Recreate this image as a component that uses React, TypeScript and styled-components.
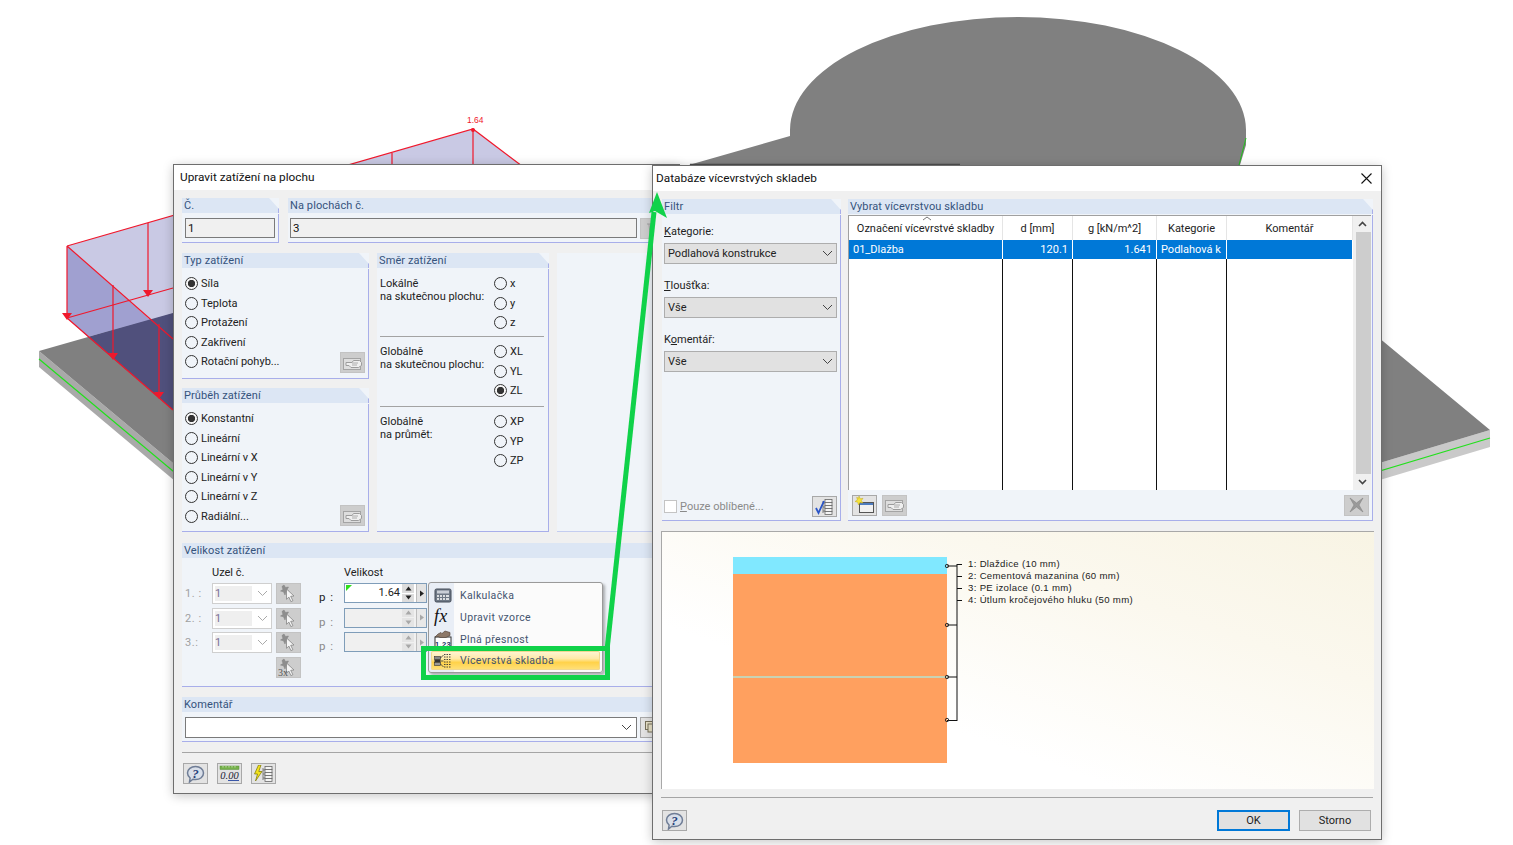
import React from 'react';
import styled, { createGlobalStyle } from 'styled-components';

const GlobalStyle = createGlobalStyle`
  html, body { margin: 0; padding: 0; background: #fff; }
  body { font-family: Roboto, "Liberation Sans", Arial, sans-serif; font-size: 11px; color: #111; }
`;

const Desk = styled.div`
  position: relative;
  width: 1513px;
  height: 845px;
  overflow: hidden;
  background: #fff;
`;

const Backdrop = styled.svg`
  position: absolute;
  inset: 0;
`;

const Overlay = styled.svg`
  position: absolute;
  inset: 0;
  z-index: 5;
  pointer-events: none;
`;

// Fenster auf der Arbeitsfläche
const Win = styled.div<{ $x: number; $y: number; $w: number; $h: number; $z: number }>`
  position: absolute;
  left: ${p => p.$x}px;
  top: ${p => p.$y}px;
  width: ${p => p.$w}px;
  height: ${p => p.$h}px;
  z-index: ${p => p.$z};
  box-sizing: border-box;
  display: flex;
  flex-direction: column;
  background: #f0f0f0;
  border: 1px solid #6e6e6e;
  box-shadow: 0 2px 10px rgba(0, 0, 0, 0.22);
`;

const TitleBar = styled.div<{ $h: number; $pad: number }>`
  flex: none;
  box-sizing: border-box;
  height: ${p => p.$h}px;
  background: #fff;
  display: flex;
  align-items: center;
  justify-content: space-between;
  padding: 0 9px 1px ${p => p.$pad}px;
  font-size: 11.8px;
  color: #111;
`;

const LeftBody = styled.div`
  display: flex;
  flex-direction: column;
  padding: 8px 8px 0 8px;
`;

const Row = styled.div<{ $gap: number; $mt?: number }>`
  display: flex;
  gap: ${p => p.$gap}px;
  margin-top: ${p => p.$mt ?? 0}px;
`;

const Column = styled.div<{ $w: number; $gap: number }>`
  width: ${p => p.$w}px;
  flex: none;
  display: flex;
  flex-direction: column;
  gap: ${p => p.$gap}px;
`;

const Group = styled.section<{ $w?: number; $h: number; $mt?: number }>`
  box-sizing: border-box;
  width: ${p => (p.$w ? `${p.$w}px` : 'auto')};
  flex: ${p => (p.$w ? 'none' : '1 1 auto')};
  height: ${p => p.$h}px;
  margin-top: ${p => p.$mt ?? 0}px;
  display: flex;
  flex-direction: column;
  background: #f0f4f9;
  border-bottom: 1px solid #a8aeea;
`;

const GroupHead = styled.div`
  flex: none;
  box-sizing: border-box;
  height: 15px;
  padding-left: 2px;
  line-height: 16px;
  font-size: 11px;
  letter-spacing: 0.1px;
  color: #35537c;
  background: #dce6f4;
  border-right: 1px solid #a8aeea;
  clip-path: polygon(0 0, calc(100% - 10px) 0, 100% 11px, 100% 100%, 0 100%);
`;

const GroupBody = styled.div`
  flex: 1;
  min-height: 0;
  margin-top: 1px;
  border-right: 1px solid #a8aeea;
  position: relative;
  display: flex;
  flex-direction: column;
`;

const BlankGroup = styled.div`
  flex: 1;
  box-sizing: border-box;
  height: 279px;
  background: #f0f4f9;
  border-bottom: 1px solid #c4cdf0;
`;

const ReadInput = styled.div<{ $w: number }>`
  box-sizing: border-box;
  width: ${p => p.$w}px;
  height: 20px;
  flex: none;
  background: #f0f0f0;
  border: 1px solid #7a7a7a;
  padding-left: 2px;
  line-height: 18px;
  font-size: 11.5px;
  color: #111;
`;

const InputRow = styled.div<{ $pad: number }>`
  display: flex;
  gap: 3px;
  padding: 4px 0 0 ${p => p.$pad}px;
`;

const RadioList = styled.div`
  display: flex;
  flex-direction: column;
  padding: 5px 0 0 3px;
`;

const RadioRow = styled.div`
  display: flex;
  align-items: center;
  gap: 3px;
  height: 19.5px;
  color: #222;
`;

const RadioDot = styled.span<{ $on?: boolean }>`
  flex: none;
  box-sizing: border-box;
  width: 13px;
  height: 13px;
  border-radius: 50%;
  border: 1px solid #333;
  background: ${p => (p.$on ? 'radial-gradient(circle, #333 0 3.4px, #f6f6f6 3.9px)' : 'transparent')};
`;

const CornerButton = styled.div`
  position: absolute;
  right: 3px;
  bottom: 5px;
`;

const IconBtn = styled.div<{ $off?: boolean; $w?: number }>`
  box-sizing: border-box;
  flex: none;
  width: ${p => p.$w ?? 25}px;
  height: 21px;
  display: flex;
  align-items: center;
  justify-content: center;
  background: ${p => (p.$off ? '#cdcdcd' : '#e3e3e3')};
  border: 1px solid ${p => (p.$off ? '#c3c3c3' : '#a8a8a8')};
  overflow: hidden;
`;

const DirBlock = styled.div<{ $h: number; $last?: boolean }>`
  box-sizing: border-box;
  height: ${p => p.$h}px;
  margin: 0 4px 0 3px;
  padding-top: 5px;
  display: flex;
  justify-content: space-between;
  border-bottom: ${p => (p.$last ? 'none' : '1px solid #a3a3a3')};
`;

const DirText = styled.div`
  padding-top: 3px;
  line-height: 13px;
  color: #222;
`;

const DirRadios = styled.div`
  width: 50px;
  flex: none;
  display: flex;
  flex-direction: column;
`;

// Velikost zatížení
const SizeGrid = styled.div`
  display: grid;
  grid-template-columns: 27px 60px 29px 43px 83px;
  grid-template-rows: 24px 24.5px 24.5px 24.5px auto;
  padding-left: 3px;
  align-items: start;
`;

const ColHead = styled.div<{ $col: number }>`
  grid-column: ${p => p.$col};
  align-self: center;
  padding-top: 2px;
  color: #222;
`;

const NodeLabel = styled.div`
  color: #a0a0a0;
  line-height: 21px;
  letter-spacing: 0.6px;
`;

const NodeSelect = styled.div`
  box-sizing: border-box;
  height: 21px;
  display: flex;
  align-items: center;
  justify-content: space-between;
  padding: 2px 3px 2px 2px;
  background: #fff;
  border: 1px solid #cfcfcf;
  color: #7a6f96;
`;

const NodeValue = styled.span`
  width: 37px;
  height: 100%;
  background: #efefef;
  line-height: 15px;
`;

const BtnCell = styled.div<{ $col?: number }>`
  padding-left: 4px;
  grid-column: ${p => p.$col ?? 'auto'};
`;

const PLabel = styled.div<{ $off?: boolean }>`
  padding: 7px 0 0 18px;
  letter-spacing: 1px;
  font-size: 11.5px;
  color: ${p => (p.$off ? '#8a8a8a' : '#222')};
`;

const SpinBox = styled.div<{ $off?: boolean }>`
  position: relative;
  box-sizing: border-box;
  height: 20px;
  display: flex;
  background: ${p => (p.$off ? '#f0f0f0' : '#fff')};
  border: 1px solid #7f9db9;
`;

const SpinValue = styled.div`
  flex: 1;
  text-align: right;
  padding-right: 2px;
  line-height: 18px;
  color: #222;
`;

const GreenFlag = styled.span`
  position: absolute;
  left: 1px;
  top: 1px;
  width: 0;
  height: 0;
  border-top: 6px solid #2fe01c;
  border-right: 6px solid transparent;
`;

const SpinArrows = styled.div`
  width: 12px;
  display: flex;
  flex-direction: column;
  gap: 1px;
  margin-right: 2px;
`;

const SpinPart = styled.div<{ $off?: boolean }>`
  flex: 1;
  background: ${p => (p.$off ? '#e4e4e4' : '#dcdcdc')};
  display: flex;
  align-items: center;
  justify-content: center;
`;

const SpinMore = styled.div<{ $off?: boolean }>`
  width: 9px;
  background: ${p => (p.$off ? '#e8e8e8' : '#e3e3e3')};
  border-left: 1px solid #bdbdbd;
  display: flex;
  align-items: center;
  justify-content: center;
`;

const CommentRow = styled.div`
  display: flex;
  gap: 3px;
  padding: 4px 0 0 3px;
`;

const CommentBox = styled.div`
  box-sizing: border-box;
  width: 452px;
  height: 21px;
  background: #fff;
  border: 1px solid #7a7a7a;
  display: flex;
  align-items: center;
  justify-content: flex-end;
  padding-right: 4px;
`;

const Separator = styled.div<{ $mt: number; $ml?: number }>`
  height: 1px;
  margin-top: ${p => p.$mt}px;
  margin-left: ${p => p.$ml ?? 0}px;
  background: #a5a5a5;
`;

const FootIcons = styled.div`
  display: flex;
  gap: 9px;
  margin: 10px 0 0 1px;
`;

// Kontextmenü über dem Eingabefeld
const Menu = styled.div`
  position: absolute;
  left: 254px;
  top: 417px;
  width: 175px;
  height: 91px;
  box-sizing: border-box;
  display: flex;
  flex-direction: column;
  padding: 1px 2px 0;
  background: linear-gradient(to right, #e9eef6 0 25px, #fbfbfb 25px);
  border: 1px solid #9a9a9a;
  border-radius: 3px;
  box-shadow: 2px 2px 3px rgba(0, 0, 0, 0.3);
  z-index: 3;
`;

const MenuItem = styled.div<{ $hot?: boolean }>`
  flex: none;
  height: ${p => (p.$hot ? 19 : 22)}px;
  margin-top: ${p => (p.$hot ? 1 : 0)}px;
  display: flex;
  align-items: center;
  gap: 6px;
  font-size: 10.5px;
  letter-spacing: 0.35px;
  color: #44546f;
  border-radius: 2px;
  background: ${p => (p.$hot ? 'linear-gradient(to bottom, #fff6d8 0%, #ffe9a8 40%, #ffd24a 60%, #ffe17c 100%)' : 'transparent')};
  box-shadow: ${p => (p.$hot ? 'inset 0 0 0 1px #f0d890' : 'none')};
`;

const MenuIcon = styled.span`
  width: 23px;
  flex: none;
  display: flex;
  justify-content: center;
`;

// Rechtes Fenster
const RightBody = styled.div`
  flex: 1;
  display: flex;
  flex-direction: column;
  padding: 8px 8px 0 9px;
`;

const FilterBody = styled.div`
  flex: 1;
  display: flex;
  flex-direction: column;
  padding: 10px 3px 3px 2px;
`;

const FieldLabel = styled.div<{ $mt: number }>`
  margin-top: ${p => p.$mt}px;
  height: 14px;
  line-height: 14px;
  color: #222;
`;

const Key = styled.span`
  text-decoration: underline;
`;

const ComboBox = styled.div`
  box-sizing: border-box;
  height: 21px;
  margin-top: 4px;
  display: flex;
  align-items: center;
  justify-content: space-between;
  padding: 0 3px 0 3px;
  background: #e1e1e1;
  border: 1px solid #adadad;
  color: #222;
`;

const FilterFoot = styled.div`
  margin-top: auto;
  display: flex;
  align-items: center;
  justify-content: space-between;
`;

const CheckWrap = styled.div`
  display: flex;
  align-items: center;
  gap: 3px;
  color: #8a8a8a;
`;

const CheckBox = styled.span`
  width: 11px;
  height: 11px;
  background: #fff;
  border: 1px solid #c4c4c4;
`;

const TableGrid = styled.div`
  flex: none;
  box-sizing: border-box;
  height: 275px;
  width: 523px;
  display: grid;
  grid-template-columns: 154px 70px 84px 70px 126px 18px;
  grid-template-rows: 24px 19px 1fr;
  background: #fff;
  border-top: 1px solid #a0a0a0;
  border-left: 1px solid #a0a0a0;
  position: relative;
`;

const HeadCell = styled.div`
  display: flex;
  align-items: center;
  justify-content: center;
  border-right: 1px solid #e5e5e5;
  color: #222;
`;

const SortMark = styled.svg`
  position: absolute;
  left: 73px;
  top: 0;
`;

const RowCell = styled.div<{ $right?: boolean }>`
  box-sizing: border-box;
  background: #0078d7;
  color: #fff;
  border-right: 1px solid #fff;
  line-height: 19px;
  padding: 0 4px;
  white-space: nowrap;
  overflow: hidden;
  text-align: ${p => (p.$right ? 'right' : 'left')};
`;

const EmptyCell = styled.div`
  border-right: 1px solid #111;
`;

const LastEmpty = styled.div`
  background: #fff;
`;

const ScrollTrack = styled.div`
  grid-column: 6;
  grid-row: 1 / 4;
  display: flex;
  flex-direction: column;
  align-items: center;
  background: #f0f0f0;
`;

const ScrollEnd = styled.div`
  flex: none;
  height: 16px;
  display: flex;
  align-items: center;
  justify-content: center;
`;

const ScrollThumb = styled.div`
  flex: 1;
  width: 15px;
  margin-left: 2px;
  background: #cdcdcd;
`;

const TableFoot = styled.div`
  flex: 1;
  display: flex;
  align-items: center;
  gap: 5px;
  padding: 0 3px 0 4px;
`;

const Push = styled.div`
  flex: 1;
`;

const Preview = styled.div`
  box-sizing: border-box;
  height: 258px;
  margin: 10px -1px 0 -1px;
  background: linear-gradient(to top right, #fff 32%, #fbf8ee 70%, #f8f4e4 100%);
  border-top: 1px solid #a8a8a8;
  border-left: 1px solid #a8a8a8;
`;

const RightFoot = styled.div`
  display: flex;
  align-items: center;
  margin: 12px 2px 0 0;
`;

const DlgButton = styled.div<{ $primary?: boolean }>`
  box-sizing: border-box;
  width: ${p => (p.$primary ? 73 : 72)}px;
  height: 21px;
  margin-left: ${p => (p.$primary ? 0 : 9)}px;
  text-align: center;
  line-height: ${p => (p.$primary ? 17 : 19)}px;
  background: #e1e1e1;
  border: ${p => (p.$primary ? '2px solid #0078d7' : '1px solid #adadad')};
  color: #222;
`;

const Svg = styled.svg`
  display: block;
  flex: none;
`;

const SmallChevron = () => (
  <Svg width="11" height="7" viewBox="0 0 11 7">
    <path d="M1 1l4.5 4.500L10 1" fill="none" stroke="#444" strokeWidth="1" />
  </Svg>
);

const TinyTri = ({ d, c }: { d: 'u' | 'd' | 'r'; c: string }) => (
  <Svg width="7" height="7" viewBox="0 0 7 7">
    <path d={d === 'u' ? 'M0.5 5.5h6L3.5 1.5z' : d === 'd' ? 'M0.5 1.5h6L3.5 5.5z' : 'M2 0.5v6L6 3.5z'} fill={c} />
  </Svg>
);

const HandIcon = () => (
  <Svg width="21" height="16" viewBox="0 0 21 16">
    <rect x="1.5" y="3.5" width="17" height="11" fill="#dedede" stroke="#a4a4a4" />
    <path d="M4 7.5h6l1.5-2h6l2 2v3l-3 2H9l-2-2H4z" fill="#efefef" stroke="#9c9c9c" />
    <path d="M10 8h6M10 10h5" stroke="#acacac" />
  </Svg>
);

const PickIcon = ({ tag }: { tag?: boolean }) => (
  <Svg width="21" height="19" viewBox="0 0 21 19">
    <path d="M6 1l1.5 2.5L10.5 3 9 5.5l2 2-3 .3L7 11 5.5 7.8 2.5 7l2.5-1.5L4 2.5z" fill="#8e8e8e" stroke="#808080" strokeWidth="0.5" />
    <path d="M8.5 5l7.500 7-3.300.3 2.200 4.400-2 .9-2-4.500-2.400 2.200z" fill="#f5f5f5" stroke="#858585" strokeWidth="0.8" />
    {tag && <text x="0" y="18" fontFamily="'Liberation Serif', serif" fontSize="10" fill="#555">3x</text>}
  </Svg>
);

const HelpIcon = () => (
  <Svg width="21" height="18" viewBox="0 0 21 18">
    <path d="M10.5 1.500c4.500 0 8 2.800 8 6.600s-3.500 6.400-8 6.400c-.9 0-1.800-.1-2.600-.3L4.500 17l.6-4C3.500 11.800 2.500 10 2.500 8.100c0-3.800 3.500-6.600 8-6.600z" fill="#d9dfe9" stroke="#6f7d96" strokeWidth="1.500" />
    <text x="10.500" y="12.500" textAnchor="middle" fontFamily="'Liberation Serif', serif" fontWeight="700" fontStyle="italic" fontSize="13" fill="#24407a">?</text>
  </Svg>
);

const ZeroIcon = () => (
  <Svg width="21" height="18" viewBox="0 0 21 18">
    <rect x="1" y="1" width="19" height="3.500" fill="#74b04a" stroke="#5a8f3a" strokeWidth="0.5" />
    <path d="M4 1v1.500M7 1v1.500M10 1v1.500M13 1v1.500M16 1v1.500" stroke="#d8ecc4" strokeWidth="0.8" />
    <text x="10.500" y="13.500" textAnchor="middle" fontFamily="'Liberation Serif', serif" fontStyle="italic" fontSize="10.500" fill="#223">0.00</text>
    <path d="M9 15.500h11" stroke="#3a57a8" strokeWidth="1" />
  </Svg>
);

const TreeRows = ({ x, c }: { x: number; c: string }) => (
  <g fill="#f4f4f4" stroke={c} strokeWidth="0.8">
    <path d={`M${x} 3v12M${x} 5h2M${x} 9h2M${x} 13h2`} fill="none" />
    <rect x={x + 2} y="1.500" width="7" height="3" />
    <rect x={x + 2} y="4.500" width="7" height="3" />
    <rect x={x + 2} y="7.500" width="7" height="3" />
    <rect x={x + 2} y="10.500" width="7" height="3" />
    <rect x={x + 2} y="13.500" width="7" height="3" />
  </g>
);

const BoltTreeIcon = () => (
  <Svg width="21" height="18" viewBox="0 0 21 18">
    <TreeRows x={10} c="#666" />
    <path d="M5.500 0L1.500 9h3L2.500 16 9 6.500H5.800L8 0z" fill="#f3e21c" stroke="#7a7400" strokeWidth="0.7" />
  </Svg>
);

const CheckTreeIcon = () => (
  <Svg width="21" height="18" viewBox="0 0 21 18">
    <TreeRows x={9} c="#666" />
    <path d="M2 10l2.500 5L10 3" fill="none" stroke="#2a55c8" strokeWidth="1.800" />
  </Svg>
);

const NewIcon = () => (
  <Svg width="21" height="18" viewBox="0 0 21 18">
    <rect x="5.500" y="6.500" width="14" height="10" fill="#f1f1f1" stroke="#555" />
    <rect x="6" y="7" width="13" height="2" fill="#4d7cc0" />
    <path d="M5 0l1.200 2.800 2.800-.5-1.700 2.400L9 7 6 6.500 4.500 9 3.700 6.200 1 5.500l2.400-1.500L2.700 1.200 4.500 2.300z" fill="#f6e43a" stroke="#c0a820" strokeWidth="0.5" />
  </Svg>
);

const CrossIcon = () => (
  <Svg width="19" height="18" viewBox="0 0 19 18">
    <path d="M3 2l6.500 5L16 2l-4 7 4 7-6.500-5L3 16l4-7z" fill="#9a9a9a" stroke="#858585" strokeWidth="0.6" />
  </Svg>
);

const TrashStub = () => (
  <Svg width="21" height="16" viewBox="0 0 21 16">
    <path d="M5 3h11M7 3l1 11h5l1-11" fill="#dedede" stroke="#a0a0a0" />
  </Svg>
);

const CopiesIcon = () => (
  <Svg width="19" height="16" viewBox="0 0 19 16">
    <rect x="2.500" y="1.500" width="10" height="8" fill="#e8e2c8" stroke="#77705a" />
    <rect x="5" y="4" width="10" height="8" fill="#e8e2c8" stroke="#77705a" />
  </Svg>
);

const CalcIcon = () => (
  <Svg width="18" height="15" viewBox="0 0 18 15">
    <rect x="1" y="1" width="16" height="13" rx="1.500" fill="#6f7986" stroke="#454c58" />
    <rect x="3" y="2.500" width="12" height="3" fill="#c9ced6" />
    <path d="M3 8h2M6 8h2M9 8h2M12 8h3M3 11h2M6 11h2M9 11h2M12 11h3" stroke="#fff" strokeWidth="1.300" />
  </Svg>
);

const FxIcon = () => (
  <Svg width="20" height="20" viewBox="0 0 20 20">
    <text x="1" y="15" fontFamily="'Liberation Serif', serif" fontStyle="italic" fontSize="18" fill="#111">fx</text>
  </Svg>
);

const PrecisionIcon = () => (
  <Svg width="18" height="19" viewBox="0 0 18 19">
    <rect x="1" y="7" width="16" height="11" fill="#fff" stroke="#333" />
    <path d="M1 7l3-3 3-1.500 1 1 3-2.500 5 1.500v3l-4 2H6L4 6.500z" fill="#8d7868" stroke="#4a3a30" strokeWidth="0.6" />
    <text x="9" y="16.500" textAnchor="middle" fontFamily="'Liberation Sans', sans-serif" fontWeight="700" fontSize="7.500" fill="#1c2f60">1.23</text>
  </Svg>
);

const LayersIcon = () => (
  <Svg width="18" height="15" viewBox="0 0 18 15">
    <rect x="0.500" y="3.500" width="6" height="3" fill="#888" stroke="#333" strokeWidth="0.6" />
    <rect x="0.500" y="6.500" width="6" height="3" fill="#333" />
    <rect x="0.500" y="9.500" width="6" height="3" fill="#999" stroke="#333" strokeWidth="0.6" />
    <path d="M6.500 5l3-3M6.500 8h3M6.500 11l3 3" stroke="#333" strokeWidth="0.8" />
    <path d="M10 1.500h7M10 4h7M10 6.500h7M10 9h7M10 11.500h7M10 14h7" stroke="#333" strokeWidth="0.9" strokeDasharray="1.500 1" />
  </Svg>
);

const RadioItem = ({ label, on }: { label: string; on?: boolean }) => (
  <RadioRow>
    <RadioDot $on={on} />
    {label}
  </RadioRow>
);

const NodeRow = ({ n }: { n: string }) => (
  <>
    <NodeLabel>{n}</NodeLabel>
    <NodeSelect>
      <NodeValue>1</NodeValue>
      <Svg width="11" height="7" viewBox="0 0 11 7">
        <path d="M1 1l4.500 4.500L10 1" fill="none" stroke="#aaa" />
      </Svg>
    </NodeSelect>
    <BtnCell>
      <IconBtn $off>
        <PickIcon />
      </IconBtn>
    </BtnCell>
  </>
);

const SpinField = ({ value }: { value?: string }) => {
  const off = !value;
  const arrow = off ? '#a8a8a8' : '#222';
  return (
    <SpinBox $off={off}>
      {value && <GreenFlag />}
      <SpinValue>{value}</SpinValue>
      <SpinArrows>
        <SpinPart $off={off}>
          <TinyTri d="u" c={arrow} />
        </SpinPart>
        <SpinPart $off={off}>
          <TinyTri d="d" c={arrow} />
        </SpinPart>
      </SpinArrows>
      <SpinMore $off={off}>
        <TinyTri d="r" c={arrow} />
      </SpinMore>
    </SpinBox>
  );
};

const columns = ['d [mm]', 'g [kN/m^2]', 'Kategorie', 'Komentář'];

const LoadDialog = () => (
  <Win $x={173} $y={164} $w={507} $h={630} $z={1}>
    <TitleBar $h={25} $pad={6}>Upravit zatížení na plochu</TitleBar>
    <LeftBody>
      <Row $gap={9}>
        <Group $w={97} $h={45}>
          <GroupHead>Č.</GroupHead>
          <GroupBody>
            <InputRow $pad={3}>
              <ReadInput $w={90}>1</ReadInput>
            </InputRow>
          </GroupBody>
        </Group>
        <Group $h={45}>
          <GroupHead>Na plochách č.</GroupHead>
          <GroupBody>
            <InputRow $pad={2}>
              <ReadInput $w={347}>3</ReadInput>
              <IconBtn $off>
                <TrashStub />
              </IconBtn>
            </InputRow>
          </GroupBody>
        </Group>
      </Row>
      <Row $gap={8} $mt={10}>
        <Column $w={187} $gap={9}>
          <Group $h={126}>
            <GroupHead>Typ zatížení</GroupHead>
            <GroupBody>
              <RadioList>
                <RadioItem label="Síla" on />
                <RadioItem label="Teplota" />
                <RadioItem label="Protažení" />
                <RadioItem label="Zakřivení" />
                <RadioItem label="Rotační pohyb..." />
              </RadioList>
              <CornerButton>
                <IconBtn $off>
                  <HandIcon />
                </IconBtn>
              </CornerButton>
            </GroupBody>
          </Group>
          <Group $h={144}>
            <GroupHead>Průběh zatížení</GroupHead>
            <GroupBody>
              <RadioList>
                <RadioItem label="Konstantní" on />
                <RadioItem label="Lineární" />
                <RadioItem label="Lineární v X" />
                <RadioItem label="Lineární v Y" />
                <RadioItem label="Lineární v Z" />
                <RadioItem label="Radiální..." />
              </RadioList>
              <CornerButton>
                <IconBtn $off>
                  <HandIcon />
                </IconBtn>
              </CornerButton>
            </GroupBody>
          </Group>
        </Column>
        <Group $w={172} $h={279}>
          <GroupHead>Směr zatížení</GroupHead>
          <GroupBody>
            <DirBlock $h={68}>
              <DirText>
                Lokálně
                <br />
                na skutečnou plochu:
              </DirText>
              <DirRadios>
                <RadioItem label="x" />
                <RadioItem label="y" />
                <RadioItem label="z" />
              </DirRadios>
            </DirBlock>
            <DirBlock $h={70}>
              <DirText>
                Globálně
                <br />
                na skutečnou plochu:
              </DirText>
              <DirRadios>
                <RadioItem label="XL" />
                <RadioItem label="YL" />
                <RadioItem label="ZL" on />
              </DirRadios>
            </DirBlock>
            <DirBlock $h={80} $last>
              <DirText>
                Globálně
                <br />
                na průmět:
              </DirText>
              <DirRadios>
                <RadioItem label="XP" />
                <RadioItem label="YP" />
                <RadioItem label="ZP" />
              </DirRadios>
            </DirBlock>
          </GroupBody>
        </Group>
        <BlankGroup />
      </Row>
      <Group $h={144} $mt={11}>
        <GroupHead>Velikost zatížení</GroupHead>
        <GroupBody>
          <SizeGrid>
            <ColHead $col={2}>Uzel č.</ColHead>
            <ColHead $col={5}>Velikost</ColHead>
            <NodeRow n="1. :" />
            <PLabel>p :</PLabel>
            <SpinField value="1.64" />
            <NodeRow n="2. :" />
            <PLabel $off>p :</PLabel>
            <SpinField />
            <NodeRow n="3.:" />
            <PLabel $off>p :</PLabel>
            <SpinField />
            <BtnCell $col={3}>
              <IconBtn $off>
                <PickIcon tag />
              </IconBtn>
            </BtnCell>
          </SizeGrid>
        </GroupBody>
      </Group>
      <Group $h={45} $mt={10}>
        <GroupHead>Komentář</GroupHead>
        <GroupBody>
          <CommentRow>
            <CommentBox>
              <SmallChevron />
            </CommentBox>
            <IconBtn>
              <CopiesIcon />
            </IconBtn>
          </CommentRow>
        </GroupBody>
      </Group>
      <Separator $mt={10} />
      <FootIcons>
        <IconBtn>
          <HelpIcon />
        </IconBtn>
        <IconBtn>
          <ZeroIcon />
        </IconBtn>
        <IconBtn>
          <BoltTreeIcon />
        </IconBtn>
      </FootIcons>
    </LeftBody>
    <Menu>
      <MenuItem>
        <MenuIcon>
          <CalcIcon />
        </MenuIcon>
        Kalkulačka
      </MenuItem>
      <MenuItem>
        <MenuIcon>
          <FxIcon />
        </MenuIcon>
        Upravit vzorce
      </MenuItem>
      <MenuItem>
        <MenuIcon>
          <PrecisionIcon />
        </MenuIcon>
        Plná přesnost
      </MenuItem>
      <MenuItem $hot>
        <MenuIcon>
          <LayersIcon />
        </MenuIcon>
        Vícevrstvá skladba
      </MenuItem>
    </Menu>
  </Win>
);

const DatabaseDialog = () => (
  <Win $x={652} $y={165} $w={730} $h={675} $z={2}>
    <TitleBar $h={25} $pad={3}>
      Databáze vícevrstvých skladeb
      <Svg width="11" height="11" viewBox="0 0 11 11">
        <path d="M0.500 0.500l10 10M10.500 0.500l-10 10" stroke="#111" strokeWidth="1.100" />
      </Svg>
    </TitleBar>
    <RightBody>
      <Row $gap={7}>
        <Group $w={179} $h={322}>
          <GroupHead>Filtr</GroupHead>
          <GroupBody>
            <FilterBody>
              <FieldLabel $mt={0}>
                <Key>K</Key>ategorie:
              </FieldLabel>
              <ComboBox>
                Podlahová konstrukce
                <SmallChevron />
              </ComboBox>
              <FieldLabel $mt={15}>
                <Key>T</Key>loušťka:
              </FieldLabel>
              <ComboBox>
                Vše
                <SmallChevron />
              </ComboBox>
              <FieldLabel $mt={15}>
                K<Key>o</Key>mentář:
              </FieldLabel>
              <ComboBox>
                Vše
                <SmallChevron />
              </ComboBox>
              <FilterFoot>
                <CheckWrap>
                  <CheckBox />
                  <span>
                    <Key>P</Key>ouze oblíbené...
                  </span>
                </CheckWrap>
                <IconBtn>
                  <CheckTreeIcon />
                </IconBtn>
              </FilterFoot>
            </FilterBody>
          </GroupBody>
        </Group>
        <Group $w={525} $h={322}>
          <GroupHead>Vybrat vícevrstvou skladbu</GroupHead>
          <GroupBody>
            <TableGrid>
              <SortMark width="10" height="5" viewBox="0 0 10 5">
                <path d="M1 4l4-3 4 3" fill="none" stroke="#777" />
              </SortMark>
              <HeadCell>Označení vícevrstvé skladby</HeadCell>
              {columns.map(c => (
                <HeadCell key={c}>{c}</HeadCell>
              ))}
              <ScrollTrack>
                <ScrollEnd>
                  <Svg width="9" height="6" viewBox="0 0 9 6">
                    <path d="M1 5l3.500-3.500L8 5" fill="none" stroke="#444" strokeWidth="1.600" />
                  </Svg>
                </ScrollEnd>
                <ScrollThumb />
                <ScrollEnd>
                  <Svg width="9" height="6" viewBox="0 0 9 6">
                    <path d="M1 1l3.500 3.500L8 1" fill="none" stroke="#444" strokeWidth="1.600" />
                  </Svg>
                </ScrollEnd>
              </ScrollTrack>
              <RowCell>01_Dlažba</RowCell>
              <RowCell $right>120.1</RowCell>
              <RowCell $right>1.641</RowCell>
              <RowCell>Podlahová k</RowCell>
              <RowCell />
              <EmptyCell />
              <EmptyCell />
              <EmptyCell />
              <EmptyCell />
              <LastEmpty />
            </TableGrid>
            <TableFoot>
              <IconBtn>
                <NewIcon />
              </IconBtn>
              <IconBtn $off>
                <HandIcon />
              </IconBtn>
              <Push />
              <IconBtn $off>
                <CrossIcon />
              </IconBtn>
            </TableFoot>
          </GroupBody>
        </Group>
      </Row>
      <Preview>
        <svg width="712" height="256" viewBox="662 532 712 256">
          <rect x="733" y="557" width="214" height="17" fill="#80e8ff" />
          <rect x="733" y="574" width="214" height="102" fill="#ffa05f" />
          <rect x="733" y="676" width="214" height="2" fill="#c8d2b4" />
          <rect x="733" y="678" width="214" height="85" fill="#ffa05f" />
          <path d="M947 566h10M947 625h10M947 677h10M947 720.500h10M957 564v157M957 564.500h5M957 576.500h5M957 588.500h5M957 600.500h5" stroke="#111" fill="none" />
          {[566, 625, 677, 720].map(y => (
            <circle key={y} cx="947" cy={y} r="1.700" fill="none" stroke="#222" strokeWidth="0.9" />
          ))}
          <g fontFamily="'Liberation Sans', Arial, sans-serif" fontSize="9.6" letterSpacing="0.32" fill="#222">
            <text x="968" y="567">1: Dlaždice (10 mm)</text>
            <text x="968" y="579">2: Cementová mazanina (60 mm)</text>
            <text x="968" y="591">3: PE izolace (0.1 mm)</text>
            <text x="968" y="603">4: Útlum kročejového hluku (50 mm)</text>
          </g>
        </svg>
      </Preview>
      <Separator $mt={8} $ml={-1} />
      <RightFoot>
        <IconBtn>
          <HelpIcon />
        </IconBtn>
        <Push />
        <DlgButton $primary>OK</DlgButton>
        <DlgButton>Storno</DlgButton>
      </RightFoot>
    </RightBody>
  </Win>
);

export default function App() {
  return (
    <Desk>
      <GlobalStyle />
      <Backdrop width="1513" height="845" viewBox="0 0 1513 845">
        <polygon points="39,351 491,729 491,746 39,367" fill="#a9a9a9" />
        <polygon points="491,729 1490,430 1490,447 491,746" fill="#c9c9c9" />
        <path d="M39 351L790 136V130A228 113 0 0 1 1246 130V145L1240 165L1290 264L1490 430L491 729Z" fill="#808080" />
        <path d="M39 359L491 737M491 737L1490 438" stroke="#22e01c" strokeWidth="1.200" fill="none" />
        <path d="M1246 138L1239 165" stroke="#22c01c" strokeWidth="1" fill="none" />
        <path d="M690 164.500H960" stroke="#4e4e4e" strokeWidth="1.500" />
        <polygon points="67,246 473,129 566,200 150.500,320" fill="#c9c9e4" />
        <polygon points="67,246 67,318 88,337 150.500,320" fill="#a0a0d0" />
        <polygon points="88,337 173,410 173,313" fill="#50507c" />
        <g stroke="#f0182c" strokeWidth="1.200" fill="none">
          <path d="M67 246L473 129L530 172M67 246V318M67 246L173 339M67 318L173 288M67 318L173 410" />
          <path d="M148 223V292M113 285V355M159 324V395M392 153V170M473 129V170" />
        </g>
        <g fill="#f0182c">
          <path d="M62 313h10l-5 7zM143 290h10l-5 7zM108 353h10l-5 7zM154 392h10l-5 7z" />
          <circle cx="473" cy="130" r="2" />
          <text x="467" y="123" fontFamily="'Liberation Sans', sans-serif" fontSize="8.500">1.64</text>
        </g>
      </Backdrop>
      <LoadDialog />
      <DatabaseDialog />
      <Overlay width="1513" height="845" viewBox="0 0 1513 845">
        <rect x="423.500" y="648.500" width="184" height="29" fill="none" stroke="#10d24a" strokeWidth="5" />
        <path d="M607 650L654 212" stroke="#10d24a" strokeWidth="5" fill="none" />
        <path d="M657 192L667 218L655 211L649 213Z" fill="#10d24a" />
      </Overlay>
    </Desk>
  );
}
